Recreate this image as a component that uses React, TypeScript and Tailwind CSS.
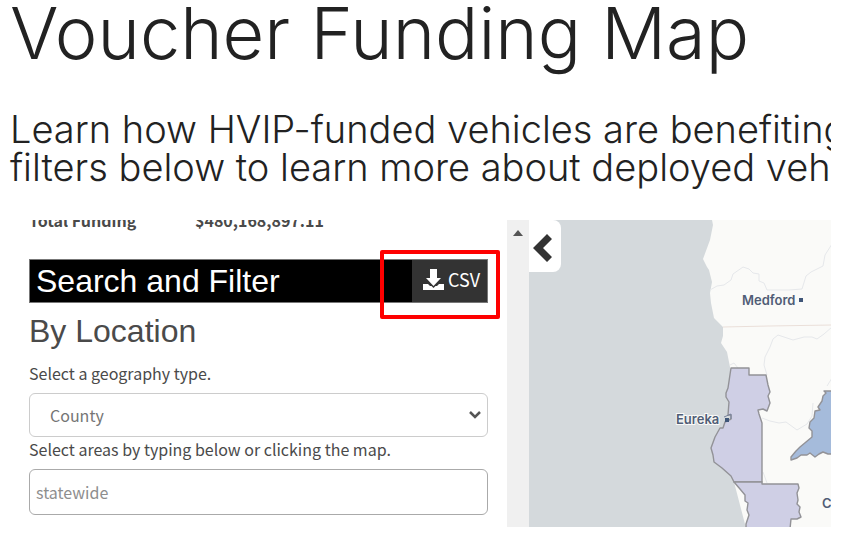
type Region = {
  id: string;
  fill: string;
  d: string;
};

const regions: Region[] = [
  {
    id: "humboldt",
    fill: "#cfcfe5",
    d: "M202 148H220V155H237L239 165L241 172L239 176L241 183L238 191L234 189L229 190L230 194L233 203V262H205L202 256L193 248L185 242L184 235L182 228L186 217L191 208L194 208L196 202L202 199V195H199L200 182L197 177V173L199 168Z",
  },
  {
    id: "mendocino",
    fill: "#cfcfe5",
    d: "M205 262H233V264H269L270 268L268 273L269 280L268 284L271 287L270 292L272 297L268 299H262L261 309H217V304L220 295L218 290L219 283L216 281V275L211 269Z",
  },
  {
    id: "shasta",
    fill: "#a5bbdb",
    d: "M304 171H295L297 173L294 176L293 181L289 187L291 190L286 191L285 198L281 202L280 208L283 211L283 217L277 222L271 227L267 231L262 237V240L268 238L272 235L278 235L281 233L286 237L290 234L294 232L299 234H304Z",
  },
];

const borders = [
  "M181 70L188 66L195 65L202 60L204 54L214 47L220 49L224 53L230 54V61L235 63L238 70H260L273 69L277 56L282 52L294 46L296 35L303 24",
  "M303 107L295 114L288 119L283 117L275 117L264 120L255 117L249 115L244 119L241 127L236 137L235 145L238 155",
  "M233 198L241 201L250 203L257 202L268 210L278 204L283 196L284 183",
  "M303 158L298 166",
  "M234 252L238 263",
  "M201 145L205 143L209 148",
];

function FundingMap() {
  return (
    <section
      aria-label="Voucher map"
      className="relative min-w-0 flex-1 overflow-hidden bg-[#d4d9dc]"
    >
      <svg
        viewBox="0 0 302 308"
        preserveAspectRatio="xMinYMin slice"
        className="absolute inset-0 h-full w-full"
      >
        <path
          d="M183 0L184 5L181 20L174 39L178 47L180 50L183 62L181 73L182 83L185 98L194 107V116L192 123L198 132L201 147L205 262L217 308H304V0Z"
          fill="#fafaf8"
        />
        {borders.map((d) => (
          <path key={d} d={d} fill="none" stroke="#e6e8eb" strokeWidth="1" />
        ))}
        <path d="M194 107L240 106L303 105" fill="none" stroke="#eadfd9" />
        {regions.map((r) => (
          <path
            key={r.id}
            d={r.d}
            fill={r.fill}
            stroke="#929297"
            strokeWidth="1.4"
            strokeLinejoin="round"
          />
        ))}
        <g
          className="font-[Inter,sans-serif] text-[13px] font-semibold"
          fill="#505d76"
          stroke="#fafaf8"
          strokeWidth="2"
          paintOrder="stroke"
        >
          <text x="213" y="85">Medford</text>
          <text x="147" y="204">Eureka</text>
          <text x="293" y="288">C</text>
        </g>
        <rect x="270" y="78" width="4" height="4" fill="#3f5678" />
        <rect x="196" y="198" width="4" height="4" fill="#3f5678" />
        <path d="M195 197L202 194V199" fill="none" stroke="#77809a" />
      </svg>
      <button
        type="button"
        aria-label="Collapse panel"
        className="relative flex h-[52px] w-8 items-center justify-center rounded-r-lg bg-white pt-1 pr-1 text-[#333]"
      >
        <svg viewBox="0 0 20 30" className="h-[30px] w-5" fill="currentColor">
          <path d="M0 15L14 1L19 6L10 15L19 24L14 29Z" />
        </svg>
      </button>
    </section>
  );
}

function DownloadIcon() {
  return (
    <svg viewBox="0 0 21 21" className="size-[21px]" fill="currentColor">
      <path d="M7 0H14V9H18L10.5 17L3 9H7Z" />
      <path d="M0 15H5L7 17H8.5L10.5 19L12.5 17H14L16 15H21V21H0Z" />
    </svg>
  );
}

function FilterPanel() {
  return (
    <section className="flex w-[529px] shrink-0 overflow-hidden font-['Noto_Sans_CJK_SC',sans-serif] text-base text-[#4a4a4a]">
      <div className="min-w-0 flex-1 pr-[19px] pb-3 pl-[29px]">
        <dl className="-mt-3 flex h-[51px] text-base leading-6 font-bold">
          <dt className="w-[166px]">Total Funding</dt>
          <dd>$480,168,897.11</dd>
        </dl>

        <div className="relative flex h-11 items-stretch justify-between border border-[#777] bg-black text-white">
          <h2 className="pl-1.5 font-['Liberation_Sans',sans-serif] text-[32px] leading-[42px]">
            Search and Filter
          </h2>
          <button
            type="button"
            className="flex w-[75px] items-center justify-center gap-1 bg-[#333] pb-1 pl-1 text-lg"
          >
            <DownloadIcon />
            CSV
          </button>
          <div className="pointer-events-none absolute -top-2.5 -right-[13px] -bottom-[17px] w-30 rounded-xs border-4 border-[#fe0000]" />
        </div>

        <h3 className="mt-2 font-['Liberation_Sans',sans-serif] text-[32px] leading-10">
          By Location
        </h3>
        <label htmlFor="geography" className="mt-2.5 block leading-6">
          Select a geography type.
        </label>
        <div className="relative mt-2">
          <select
            id="geography"
            defaultValue="County"
            className="h-11 w-full appearance-none rounded-md border border-[#ccc] bg-white px-5 text-[#757575]"
          >
            <option>County</option>
          </select>
          <svg
            viewBox="0 0 12 8"
            className="pointer-events-none absolute top-[18px] right-[7px] h-2 w-3"
            fill="none"
            stroke="#555"
            strokeWidth="2.5"
          >
            <path d="M1 1L6 6L11 1" />
          </svg>
        </div>
        <label htmlFor="areas" className="block leading-6">
          Select areas by typing below or clicking the map.
        </label>
        <input
          id="areas"
          type="text"
          placeholder="statewide"
          className="mt-2 block h-[46px] w-full rounded-md border border-[#aaa] bg-white px-1.5 placeholder:text-[#8e8e8e]"
        />
      </div>
      <div className="flex w-[22px] justify-center bg-[#f0f0f0] pt-2.5">
        <svg viewBox="0 0 10 6" className="h-1.5 w-2.5" fill="#555">
          <path d="M5 0L10 6H0Z" />
        </svg>
      </div>
    </section>
  );
}

export default function App() {
  return (
    <main className="overflow-hidden bg-white pr-3 pb-3 font-[Inter,sans-serif] text-[#222]">
      <h1 className="pl-2.5 text-[72px] leading-[66px] font-light whitespace-nowrap">
        Voucher Funding Map
      </h1>
      <p className="mt-11 overflow-hidden pb-2 pl-2.5 text-[38px] leading-[38px] font-light whitespace-nowrap">
        Learn how HVIP-funded vehicles are benefiting
        <br />
        filters below to learn more about deployed veh
      </p>
      <div className="mt-[26px] flex">
        <FilterPanel />
        <FundingMap />
      </div>
    </main>
  );
}
